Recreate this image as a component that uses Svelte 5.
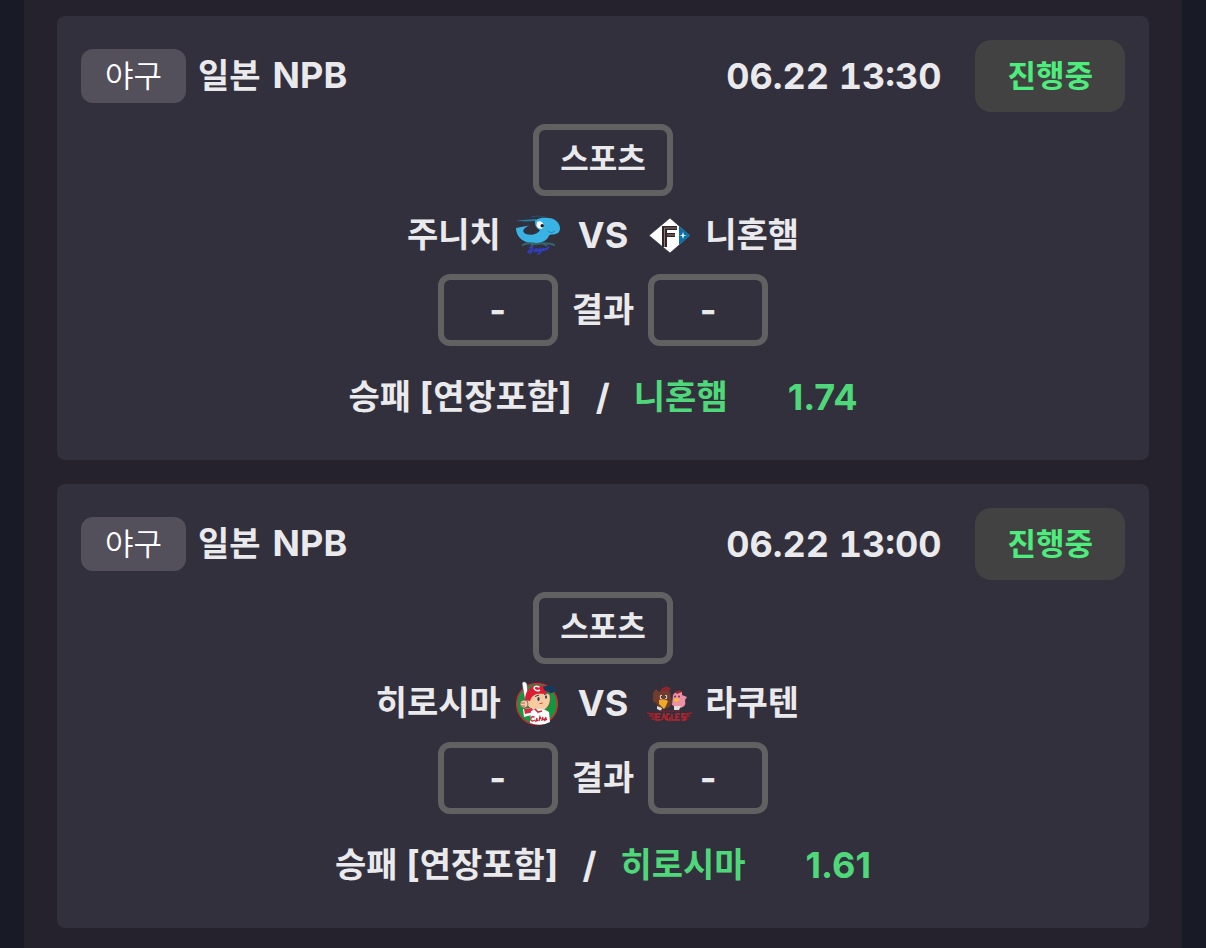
<script>
  const games = [
    { time: '06.22 13:30', home: '주니치', homeLogo: 'dragons', away: '니혼햄', awayLogo: 'fighters', pick: '니혼햄', odds: '1.74' },
    { time: '06.22 13:00', home: '히로시마', homeLogo: 'carp', away: '라쿠텐', awayLogo: 'eagles', pick: '히로시마', odds: '1.61' }
  ];
</script>

{#snippet logo(name)}
  <svg class="logo" viewBox="0 0 60 60" aria-hidden="true">
    {#if name === 'dragons'}
      <path d="M9 15.5 L29 14 L29 16 L18 16.5 Z" fill="#247ea5" />
      <path d="M24 12 Q31 10 38 12" fill="none" stroke="#23516a" stroke-width="1" />
      <path d="M28 18 C27 12 39 12 45 13.5 C53 16 55 25 51 28 C48 30 45 29 42.5 30 C38 40 24 40 17 36 C11 33 9 27 9 23 L22 20.5 C15 24 15 27 19 29 C24 31 31 29 33 25 C30 24 28 21 28 18Z" fill="#39b2e4" />
      <path d="M30 17 C33 15 37 17 36.5 22 C35 25 30 24 29.5 20Z" fill="#fff" />
      <circle cx="35.2" cy="20.7" r="1.7" fill="#151a29" />
      <path d="M41 26.5 Q45 29 48 26" fill="none" stroke="#2687b0" />
      <path d="M15 40.5 Q20 37 29 39 Q42 37 48 40.5 M24 41 L28 38 M40 40.5 L35 38" fill="none" stroke="#35646d" stroke-width="2" />
      <path d="M22 43 L25 42 Q27 44 23 48 L21 47 L24 44 M27 47 Q29 43 30 44 Q28 47 31 46 L33 43 Q32 47 34 46 L36 43 Q35 46 37 45 L39 43 Q38 46 40 44 L42 41 M33 46 Q34 49 30 49" fill="none" stroke="#303fc2" stroke-width="1.7" />
    {:else if name === 'fighters'}
      <path d="M31 13 L51 30.5 L31 48 L10 30.5Z" fill="#fff" stroke="#202633" stroke-width=".6" />
      <path d="M40 20.9 L51 30.5 L40 40.1Z" fill="#0971aa" />
      <path d="M23 21 H38 V25 H28 V28 H36 V32 H28 V42 H23Z" fill="#302527" />
      <path d="M25.5 42 V23 H38 M28 30 H36" fill="none" stroke="#a48f8b" stroke-width=".8" />
      <path d="M44 27 L45 30 L48 30.5 L45 31 L44 34 L43 31 L40 30.5 L43 30Z" fill="#eaf8ff" />
    {:else if name === 'carp'}
      <circle cx="30" cy="31" r="20.5" fill="#15963f" stroke="#db2431" stroke-width="1.3" />
      <path d="M15 10 Q18 7 20 11 L22 31 L19 34Z" fill="#fff" stroke="#29385d" stroke-width=".5" />
      <path d="M20 27 C19 33 23 36 28 37 C37 40 45 34 43 22 L36 17 L24 21Z" fill="#f8ca9f" stroke="#593d3b" stroke-width=".6" />
      <path d="M18 27 C18 15 27 10 35 13 C41 15 42 20 37 21 C31 20 25 21 23 28Z" fill="#db1e33" />
      <path d="M36 13.5 C42 12 49 13 49 17 Q46 21 43 20 L37 17Z" fill="#16395d" />
      <path d="M32.5 14 Q27 12 27 15.5 Q29 19 33 17" fill="none" stroke="#fff" stroke-width="1.5" />
      <path d="M28 23.5 L32 22 M37 21.5 L40 20.5" stroke="#272536" stroke-width=".9" />
      <ellipse cx="31.5" cy="26" rx="1.1" ry="2" fill="#203c65" />
      <ellipse cx="39" cy="24" rx="1" ry="1.8" fill="#203c65" />
      <path d="M32 30.5 L36 29.5 Q35 32 32 30.5" fill="#d23d40" />
      <path d="M16 36 L26 35 L28 41 L17 44Z" fill="#fff" />
      <path d="M17 36 L25 35 L27 39 L18 41Z" fill="#da2940" />
      <path d="M24 38 Q34 33 42 39 L43 49 Q34 54 23 50Z" fill="#fff" />
      <path d="M28 36 L31 39 L35 38" fill="none" stroke="#d32739" stroke-width="1.7" />
      <path d="M27.5 44 Q23 43 24 47 Q25 49 28 47 M30 45 L29 48 L31 47 M32 48 L33 44 L34 46 M36 44 L35 47 L38 46 M39 44 L38 47 L40 46" fill="none" stroke="#ce2338" stroke-width="1.4" />
      <circle cx="17" cy="31" r="4" fill="#f8ca9f" stroke="#593d3b" stroke-width=".6" />
      <path d="M14 30 L18 30 M14 33 L18 33" stroke="#6a463d" stroke-width=".7" />
    {:else}
      <path d="M14 20 L17 16 L20 19 Q25 14 31 19 L33 31 Q28 38 20 35 L18 31 L14 28Z" fill="#713c2b" />
      <path d="M22 16 Q28 11 32 16 L30 18 L22 18Z" fill="#8d252b" />
      <path d="M34 22 Q37 17 43 19 L43 22 L48 24 L46 27 Q48 35 39 35 L33 32Z" fill="#ed8fa5" />
      <path d="M36 19 L41 17 L43 19 L38 21Z" fill="#9e2330" />
      <ellipse cx="22" cy="24" rx="1.2" ry="2" fill="#fff" />
      <ellipse cx="27" cy="24" rx="1.2" ry="2" fill="#fff" />
      <circle cx="22.5" cy="24" r=".9" fill="#222" />
      <circle cx="26.5" cy="24" r=".9" fill="#222" />
      <path d="M20 27 Q25 25 29 28 L27 33 L25 36 L20 31Z" fill="#efa929" />
      <path d="M35 26 Q39 24 41 27 L38 29 L35 28Z" fill="#f5be36" />
      <circle cx="36" cy="23.5" r=".9" fill="#553444" />
      <circle cx="40" cy="23.5" r=".9" fill="#553444" />
      <path d="M18 33 L23 35 L22 38 L18 36 M35 33 L42 33 L40 37 L35 37" fill="#e2dcda" />
      <path d="M21 38 H42" stroke="#7c2430" stroke-width="1.5" stroke-dasharray="2 1" />
      <path d="M18 41 L8 40 L14 42 L10 43 L16 44 L13 46 L17 47 M43 41 L53 40 L47 42 L50 43 L45 45 L48 46 L44 47" fill="none" stroke="#9d202a" stroke-width="1.2" />
      <path d="M22 41 H17 V47 H22 M17 44 H21 M23 47 L25 41 L27 47 M31 41 H28 V47 H31 V44 M33 41 V47 H36 M41 41 H37 V47 H41 M37 44 H40 M46 41 H43 V44 H46 V47 H42" fill="none" stroke="#bf242d" stroke-width="1.4" />
    {/if}
  </svg>
{/snippet}

<main class="panel">
  {#each games as game}
    <article class="card">
      <header class="head">
        <span class="sport">야구</span>
        <h2 class="league">일본 <span class="latin">NPB</span></h2>
        <time class="latin">{game.time}</time>
        <span class="status">진행중</span>
      </header>
      <a class="category" href="#sports">스포츠</a>
      <div class="match">
        <div class="team home"><span class="hangul">{game.home}</span>{@render logo(game.homeLogo)}</div>
        <span class="latin versus">VS</span>
        <div class="team">{@render logo(game.awayLogo)}<span class="hangul">{game.away}</span></div>
      </div>
      <div class="result">
        <span class="score latin">-</span>
        <span class="hangul">결과</span>
        <span class="score latin">-</span>
      </div>
      <p class="bet">
        <span class="hangul">승패<span class="latin">{' '}[</span>연장포함<span class="latin">]</span></span>
        <span class="slash latin">/</span>
        <span class="green hangul">{game.pick}</span>
        <span class="odds green latin">{game.odds}</span>
      </p>
    </article>
  {/each}
</main>

<style>
  :global(body) {
    margin: 0;
    background: #181b25;
  }
  .panel {
    box-sizing: border-box;
    margin: 0 24px;
    padding: 16px 33px 20px;
    display: grid;
    gap: 24px;
    background: #25222e;
    color: #eaeaec;
    font: 700 34px/54px "Noto Sans CJK KR", sans-serif;
  }
  .latin {
    font-family: Inter, "Noto Sans CJK KR", sans-serif;
    font-size: 36px;
    font-weight: 700;
  }
  time {
    font-variant-numeric: tabular-nums;
  }
  .hangul,
  .league {
    padding-bottom: 4px;
    line-height: 50px;
  }
  .card {
    display: flex;
    flex-direction: column;
    align-items: center;
    padding: 24px 24px 36px;
    border-radius: 8px;
    background: #33303d;
  }
  .head {
    display: flex;
    align-items: center;
    align-self: stretch;
    height: 72px;
  }
  .sport {
    padding: 0 24px 4px;
    border-radius: 12px;
    background: #53505c;
    color: #fff;
    font-size: 31px;
    font-weight: 350;
    line-height: 50px;
  }
  .league {
    display: flex;
    align-items: baseline;
    gap: 12px;
    margin: 0 auto 0 12px;
    font-size: 34px;
  }
  .status {
    margin-left: 34px;
    padding: 0 32px 4px;
    border-radius: 16px;
    background: #424242;
    color: #4eeb7d;
    font-size: 31px;
    line-height: 68px;
  }
  .category {
    box-sizing: border-box;
    height: 72px;
    margin-top: 12px;
    padding: 0 21px;
    border: 6px solid #616161;
    border-radius: 12px;
    color: inherit;
    font-size: 31px;
    text-decoration: none;
    line-height: 54px;
  }
  .match {
    display: grid;
    grid-template-columns: 1fr auto 1fr;
    align-items: center;
    height: 78px;
  }
  .versus {
    margin: 0 5px;
  }
  .team {
    display: flex;
    align-items: center;
  }
  .home {
    justify-content: flex-end;
  }
  .logo {
    width: 60px;
    height: 60px;
    margin: 0 6px;
  }
  .result {
    display: flex;
    align-items: center;
    gap: 14px;
  }
  .score {
    box-sizing: border-box;
    width: 120px;
    height: 72px;
    border: 6px solid #616161;
    border-radius: 12px;
    line-height: 60px;
    text-align: center;
  }
  .bet {
    display: flex;
    align-items: center;
    height: 54px;
    margin: 24px 0 0;
  }
  .slash {
    margin: 0 24px;
  }
  .green {
    color: #4fd879;
  }
  .odds {
    margin-left: 60px;
  }
</style>
